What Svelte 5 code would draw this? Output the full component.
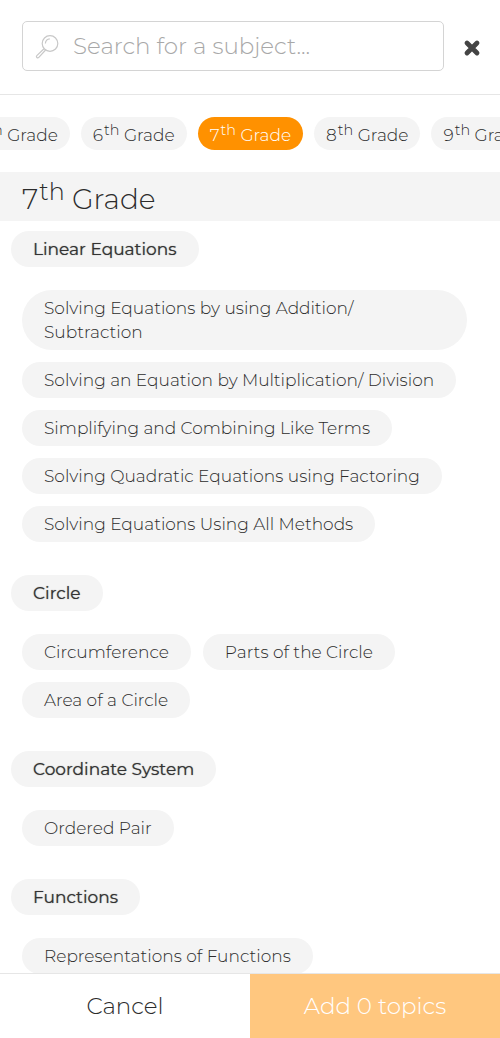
<script>
	let search = '';
	let selectedGrade = 7;
	let selectedTopics = [];

	const grades = [5, 6, 7, 8, 9];

	const subjects = [
		{
			name: 'Linear Equations',
			topics: [
				'Solving Equations by using Addition/ Subtraction',
				'Solving an Equation by Multiplication/ Division',
				'Simplifying and Combining Like Terms',
				'Solving Quadratic Equations using Factoring',
				'Solving Equations Using All Methods'
			]
		},
		{ name: 'Circle', topics: ['Circumference', 'Parts of the Circle', 'Area of a Circle'] },
		{ name: 'Coordinate System', topics: ['Ordered Pair'] },
		{ name: 'Functions', topics: ['Representations of Functions'] }
	];

	const toggleTopic = (topic) => {
		selectedTopics = selectedTopics.includes(topic)
			? selectedTopics.filter((t) => t !== topic)
			: [...selectedTopics, topic];
	};
</script>

<div class="picker">
	<header>
		<label class="search">
			<svg viewBox="0 0 24 24" width="24" height="24" aria-hidden="true">
				<circle cx="15" cy="9.5" r="7.8" />
				<path d="M10.4 9.5a4.7 4.7 0 0 1 4.4-4.7" />
				<path d="M9 14.8 L1.8 21.6 a1.3 1.3 0 0 0 2 1.8 L10.6 16" />
			</svg>
			<input
				type="text"
				aria-label="Search for a subject"
				placeholder="Search for a subject..."
				bind:value={search}
			/>
		</label>
		<button class="close" aria-label="Close" on:click={() => (search = '')}>
			<svg viewBox="0 0 16 16" width="16" height="16" aria-hidden="true">
				<path d="M3 5 L13 15 M13 5 L3 15" />
			</svg>
		</button>
	</header>

	<nav>
		{#each grades as grade}
			<button
				class="grade"
				class:active={grade === selectedGrade}
				on:click={() => (selectedGrade = grade)}
			>
				{grade}<sup>th</sup> Grade
			</button>
		{/each}
	</nav>

	<main>
		<h1>{selectedGrade}<sup>th</sup> Grade</h1>
		{#each subjects as subject}
			<section>
				<h2>{subject.name}</h2>
				<div class="topics">
					{#each subject.topics as topic}
						<button
							class="topic"
							class:active={selectedTopics.includes(topic)}
							on:click={() => toggleTopic(topic)}
						>
							{topic}
						</button>
					{/each}
				</div>
			</section>
		{/each}
	</main>

	<footer>
		<button class="cancel" on:click={() => (selectedTopics = [])}>Cancel</button>
		<button class="add" class:ready={selectedTopics.length}>
			Add {selectedTopics.length} topics
		</button>
	</footer>
</div>

<style>
	:global(body) {
		margin: 0;
		background: #fff;
	}

	.picker {
		display: flex;
		flex-direction: column;
		height: 100vh;
		overflow: hidden;
		color: #2c2c2c;
		font-family: 'Montserrat', 'Inter', sans-serif;
		font-weight: 300;
	}

	button,
	input {
		font-family: inherit;
		font-weight: inherit;
		color: inherit;
		border: none;
		background: none;
		margin: 0;
		padding: 0;
	}

	button {
		cursor: pointer;
	}

	sup {
		margin-left: 1px;
		font-size: 85%;
		line-height: 0;
		vertical-align: 6px;
	}

	header {
		display: flex;
		align-items: center;
		flex: none;
		padding: 21px 16px 23px 22px;
		border-bottom: 1px solid #e6e6e6;
	}

	.search {
		display: flex;
		align-items: center;
		flex: 1;
		gap: 14px;
		height: 48px;
		padding: 0 12px;
		border: 1px solid #d4d4d4;
		border-radius: 5px;
	}

	.search svg {
		flex: none;
		overflow: visible;
		fill: none;
		stroke: #c8c8c8;
		stroke-width: 1.2;
	}

	.search input {
		flex: 1;
		min-width: 0;
		font-size: 23px;
		outline: none;
	}

	.search input::placeholder {
		color: #a8a8a8;
		opacity: 1;
	}

	.close {
		display: flex;
		margin-left: 20px;
		padding: 4px 0;
	}

	.close svg {
		margin-right: 4px;
		overflow: visible;
		fill: none;
		stroke: #444;
		stroke-width: 4.8;
		stroke-linecap: round;
	}

	nav {
		display: flex;
		justify-content: center;
		flex: none;
		gap: 11px;
		padding: 22px 0 22px 2px;
		overflow: hidden;
	}

	.grade {
		flex: none;
		height: 33px;
		padding: 3px 12px 0;
		border-radius: 17px;
		background: #f4f4f4;
		font-size: 17px;
		line-height: 30px;
		white-space: nowrap;
	}

	.active {
		background: #ff9100;
		color: #fff;
	}

	main {
		flex: 1;
		min-height: 0;
		overflow-y: auto;
		scrollbar-width: none;
	}

	h1 {
		margin: 0 0 10px;
		padding: 5px 22px 0;
		background: #f4f4f4;
		font-size: 28px;
		font-weight: 300;
		line-height: 44px;
	}

	h1 sup {
		vertical-align: 9px;
	}

	section {
		margin-bottom: 33px;
		padding: 0 11px;
	}

	h2 {
		width: fit-content;
		margin: 0 0 23px;
		padding: 6px 22px;
		border-radius: 18px;
		background: #f4f4f4;
		color: #333;
		font-size: 17px;
		font-weight: 400;
		line-height: 24px;
		text-shadow: 0 0 1px #777;
	}

	.topics {
		display: flex;
		flex-wrap: wrap;
		gap: 12px;
		padding: 0 22px 0 11px;
	}

	.topic {
		padding: 6px 22px;
		border-radius: 30px;
		background: #f4f4f4;
		font-size: 17px;
		line-height: 24px;
		text-align: left;
	}

	.topic.active {
		background: #ff9100;
	}

	footer {
		display: flex;
		flex: none;
		border-top: 1px solid #e6e6e6;
	}

	footer button {
		flex: 1;
		height: 64px;
		font-size: 23px;
	}

	.add {
		background: #ffc77f;
		color: #fff;
	}

	.add.ready {
		background: #ff9100;
	}
</style>
